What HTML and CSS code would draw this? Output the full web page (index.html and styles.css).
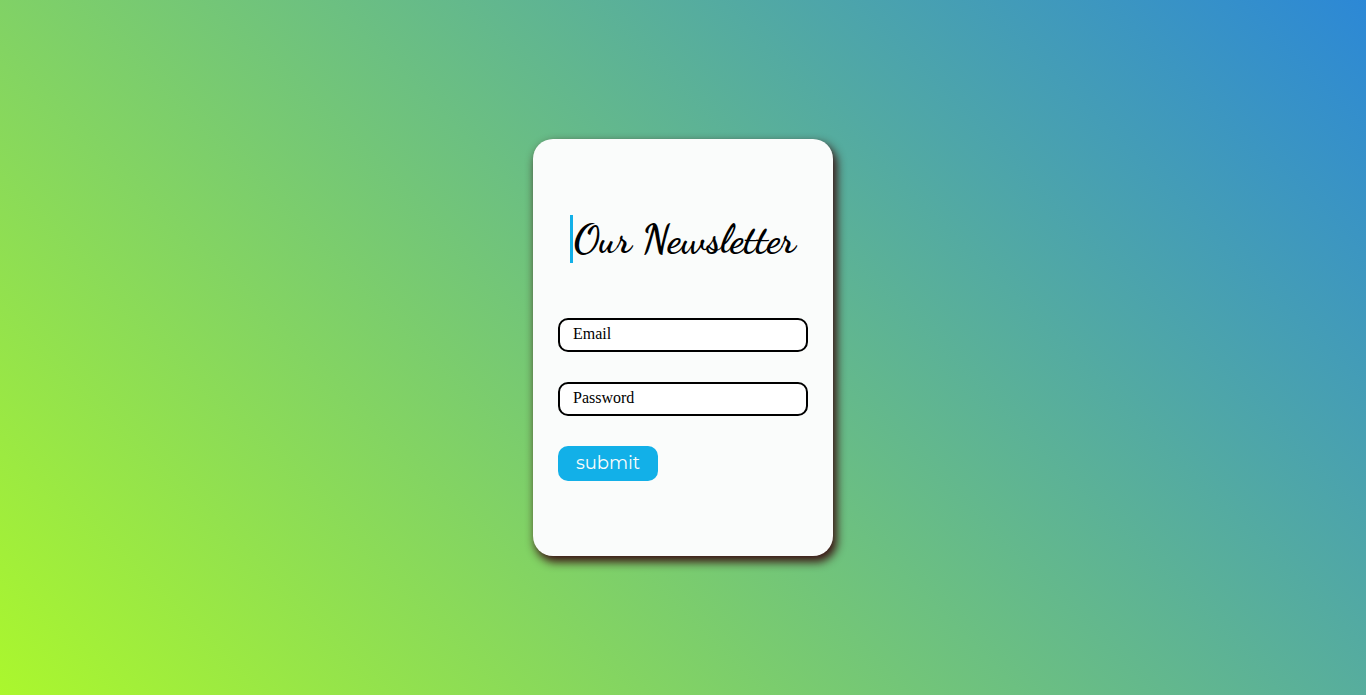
FILE: index.html
```html
<!DOCTYPE html>
<html lang="en">
<head>
<meta charset="utf-8">
<title>Our Newsletter</title>
<link rel="stylesheet" href="styles.css">
</head>
<body>
<main class="card">
  <h1 class="title">Our Newsletter</h1>
  <form class="form">
    <input class="field" type="email" placeholder="Email" aria-label="Email">
    <input class="field" type="password" placeholder="Password" aria-label="Password">
    <button class="submit" type="button">submit</button>
  </form>
</main>
</body>
</html>
```

FILE: styles.css
```css
* {
  box-sizing: border-box;
}

body {
  margin: 0;
  min-height: 100vh;
  display: flex;
  align-items: center;
  justify-content: center;
  background: linear-gradient(45deg, #abf72d, #2c88d6);
}

.card {
  width: 300px;
  padding: 76px 25px 75px;
  display: flex;
  flex-direction: column;
  align-items: center;
  gap: 55px;
  border-radius: 20px;
  background: #fafcfb;
  box-shadow: 3px 5px 10px 1px #3b1414;
}

.title {
  margin: 0;
  border-left: 3px solid #12b0e8;
  font-family: "Dancing Script", "Liberation Serif", serif;
  font-size: 40px;
  font-weight: 700;
  line-height: 48px;
  white-space: nowrap;
  color: #000;
}

.form {
  width: 100%;
  display: flex;
  flex-direction: column;
  align-items: flex-start;
  gap: 30px;
}

.field {
  width: 100%;
  height: 34px;
  padding: 0 13px 2px;
  border: 2px solid #000;
  border-radius: 10px;
  background: #fff;
  font-family: "Liberation Serif", serif;
  font-size: 16px;
  color: #000;
}

.field::placeholder {
  color: #000;
  opacity: 1;
}

.submit {
  width: 100px;
  height: 35px;
  padding: 0 0 1px;
  border: 0;
  border-radius: 10px;
  background: #12b0e8;
  font-family: Montserrat, "Open Sans", sans-serif;
  font-size: 18px;
  color: #fafcfb;
}
```
